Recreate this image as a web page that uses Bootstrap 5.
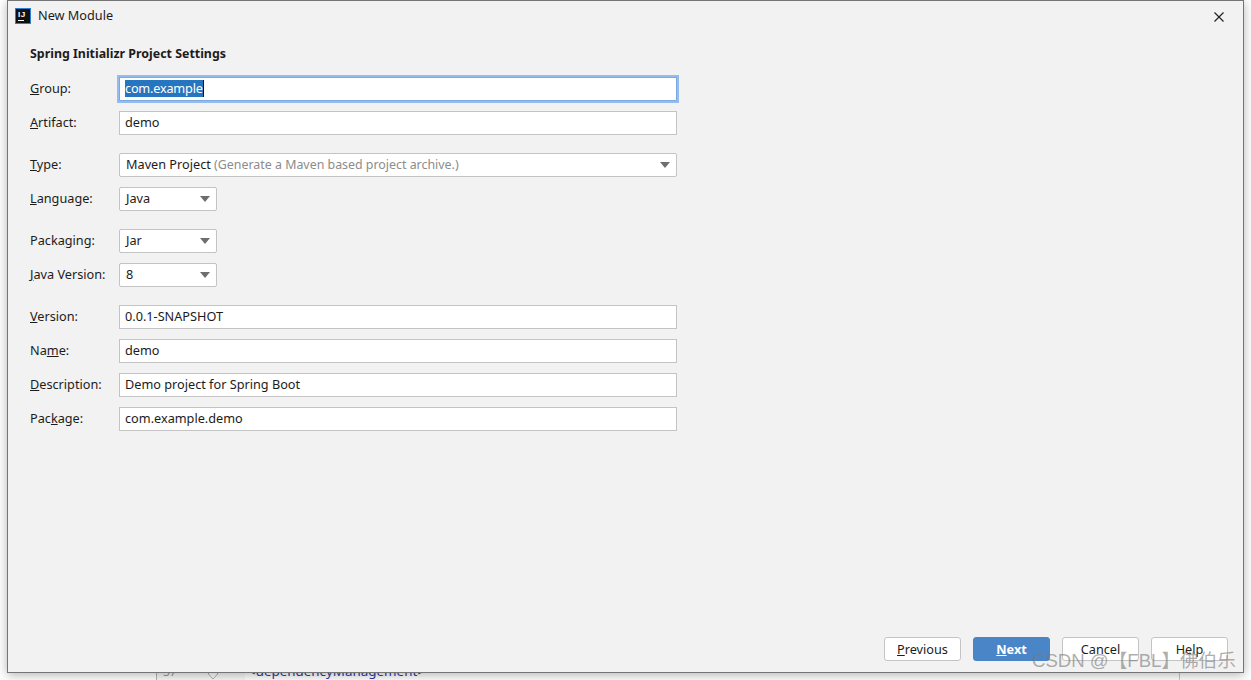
<!DOCTYPE html>
<html lang="en">
<head>
  <meta charset="UTF-8">
  <meta name="viewport" content="width=device-width, initial-scale=1">
  <title>New Module</title>
  <link href="https://cdn.jsdelivr.net/npm/bootstrap@5.3.2/dist/css/bootstrap.min.css" rel="stylesheet">
  <style>
    html, body {
      height: 680px;
      overflow: hidden;
    }
    body {
      background: #fff;
      padding: 0 7px;
      font-family: "Noto Sans", "Open Sans", sans-serif;
      font-size: 12.7px;
      color: #1c1c1c;
    }
    .ide-window {
      position: relative;
      z-index: 1;
      height: 673px;
      background: #f2f2f2;
      border: 1px solid #757575;
      box-shadow: 0 2px 10px rgba(0,0,0,0.3);
    }
    .title-row {
      height: 30px;
      padding: 7px 19px 0 7px;
    }
    .title-text {
      margin-left: 7px;
      line-height: 14px;
    }
    .settings-head {
      margin: 14px 0 14px 22px;
      height: 18px;
      line-height: 18px;
      font-weight: 700;
      font-size: 12.4px;
    }
    .settings-form {
      padding-left: 22px;
      width: 670px;
    }
    .field-row {
      height: 24px;
      margin-bottom: 10px;
    }
    .field-row.group-end {
      margin-bottom: 18px;
    }
    .field-label {
      width: 89px;
      flex: none;
      line-height: 22px;
    }
    .ide-input.form-control {
      height: 24px;
      min-height: 24px;
      width: 558px;
      padding: 0 5px;
      border: 1px solid #c4c4c4;
      border-radius: 0;
      background: #fff;
      font-size: 12.7px;
      line-height: 20px;
      color: #1c1c1c;
    }
    .ide-input.is-focused {
      border-color: #7fa9dc;
      box-shadow: 0 0 0 2px #93bdf0;
    }
    .picked {
      background: #2675bf;
      color: #fff;
      display: inline-block;
      line-height: 17px;
      margin-top: 2px;
      vertical-align: top;
      border-right: 1px solid #111;
      letter-spacing: -0.2px;
    }
    .ide-select {
      height: 24px;
      width: 98px;
      padding: 0 6px;
      border: 1px solid #c4c4c4;
      border-radius: 2px;
      background: #fff;
      line-height: 20px;
    }
    .ide-select.wide {
      width: 558px;
    }
    .choice-text {
      margin-bottom: 2px;
    }
    .hint-text {
      color: #8c8c8c;
      font-size: 12.4px;
    }
    .ide-footer {
      position: absolute;
      right: 15px;
      bottom: 11px;
      gap: 12px;
    }
    .ide-btn.btn {
      width: 77px;
      height: 24px;
      padding: 0;
      font-size: 12.7px;
      line-height: 22px;
      color: #1c1c1c;
      background: #fff;
      border: 1px solid #c4c4c4;
      border-radius: 3px;
    }
    .ide-btn.is-default {
      background: #4a86c7;
      border-color: #4a86c7;
      color: #fff;
      font-weight: 700;
    }
    .editor-peek {
      height: 15px;
      margin: -8px 64px 0 149px;
      border-left: 1px solid #b5b5b5;
      border-right: 1px solid #c8c8c8;
      background: linear-gradient(to right, #f8f8f8 88px, #fff 88px);
      font-size: 13.4px;
      line-height: 13px;
      white-space: nowrap;
    }
    .peek-line {
      width: 50px;
      padding-left: 6px;
      color: #9a9a9a;
      font-size: 12px;
    }
    .peek-fold {
      margin: 4px 29px 0 0;
    }
    .peek-code {
      color: #2b3aa8;
    }
    .stamp {
      position: absolute;
      z-index: 2;
      left: 1032px;
      top: 648px;
      font-family: "Liberation Sans", "Noto Sans CJK SC", sans-serif;
      font-size: 18.6px;
      line-height: 26px;
      color: rgba(120,120,120,0.6);
      white-space: nowrap;
    }
  </style>
</head>
<body>
  <div class="ide-window">
    <div class="title-row d-flex align-items-start">
      <svg width="16" height="16" viewBox="0 0 16 16">
        <rect x="0.5" y="0.5" width="15" height="15" fill="#111" stroke="#2b7fd6"/>
        <text x="3" y="9" fill="#fff" font-family="Liberation Sans" font-size="8" font-weight="700" letter-spacing="0.6">IJ</text>
        <rect x="3" y="12" width="6" height="1" fill="#fff"/>
      </svg>
      <span class="title-text">New Module</span>
      <svg class="ms-auto mt-1" width="10" height="10" viewBox="0 0 10 10">
        <path d="M0.5 0.5 9.5 9.5M9.5 0.5 0.5 9.5" stroke="#222" stroke-width="1.2" fill="none"/>
      </svg>
    </div>

    <div class="settings-head">Spring Initializr Project Settings</div>

    <div class="settings-form">
      <div class="field-row d-flex">
        <div class="field-label"><u>G</u>roup:</div>
        <div class="ide-input form-control is-focused"><span class="picked">com.example</span></div>
      </div>
      <div class="field-row group-end d-flex">
        <div class="field-label"><u>A</u>rtifact:</div>
        <div class="ide-input form-control">demo</div>
      </div>
      <div class="field-row d-flex">
        <div class="field-label"><u>T</u>ype:</div>
        <div class="ide-select wide d-flex justify-content-between align-items-center">
          <span class="choice-text">Maven Project <span class="hint-text">(Generate a Maven based project archive.)</span></span>
          <svg width="10" height="6" viewBox="0 0 10 6"><path d="M0 0H10L5 6Z" fill="#6e6e6e"/></svg>
        </div>
      </div>
      <div class="field-row group-end d-flex">
        <div class="field-label"><u>L</u>anguage:</div>
        <div class="ide-select d-flex justify-content-between align-items-center">
          <span class="choice-text">Java</span>
          <svg width="10" height="6" viewBox="0 0 10 6"><path d="M0 0H10L5 6Z" fill="#6e6e6e"/></svg>
        </div>
      </div>
      <div class="field-row d-flex">
        <div class="field-label">Packa<u>g</u>ing:</div>
        <div class="ide-select d-flex justify-content-between align-items-center">
          <span class="choice-text">Jar</span>
          <svg width="10" height="6" viewBox="0 0 10 6"><path d="M0 0H10L5 6Z" fill="#6e6e6e"/></svg>
        </div>
      </div>
      <div class="field-row group-end d-flex">
        <div class="field-label"><u>J</u>ava Version:</div>
        <div class="ide-select d-flex justify-content-between align-items-center">
          <span class="choice-text">8</span>
          <svg width="10" height="6" viewBox="0 0 10 6"><path d="M0 0H10L5 6Z" fill="#6e6e6e"/></svg>
        </div>
      </div>
      <div class="field-row d-flex">
        <div class="field-label"><u>V</u>ersion:</div>
        <div class="ide-input form-control">0.0.1-SNAPSHOT</div>
      </div>
      <div class="field-row d-flex">
        <div class="field-label">Na<u>m</u>e:</div>
        <div class="ide-input form-control">demo</div>
      </div>
      <div class="field-row d-flex">
        <div class="field-label"><u>D</u>escription:</div>
        <div class="ide-input form-control">Demo project for Spring Boot</div>
      </div>
      <div class="field-row d-flex">
        <div class="field-label">Pac<u>k</u>age:</div>
        <div class="ide-input form-control">com.example.demo</div>
      </div>
    </div>

    <div class="ide-footer d-flex">
      <button type="button" class="ide-btn btn"><u>P</u>revious</button>
      <button type="button" class="ide-btn btn is-default"><u>N</u>ext</button>
      <button type="button" class="ide-btn btn">Cancel</button>
      <button type="button" class="ide-btn btn">Help</button>
    </div>
  </div>

  <div class="editor-peek d-flex">
    <span class="peek-line">37</span>
    <svg class="peek-fold" width="12" height="11" viewBox="0 0 12 11"><path d="M1.5 0.5H10.5V5L6 10 1.5 5Z" fill="#fff" stroke="#b0b0b0"/></svg>
    <span class="peek-code">&lt;dependencyManagement&gt;</span>
  </div>
  <div class="stamp">CSDN @【FBL】佛伯乐</div>

  <script src="https://cdn.jsdelivr.net/npm/bootstrap@5.3.2/dist/js/bootstrap.bundle.min.js"></script>
</body>
</html>
